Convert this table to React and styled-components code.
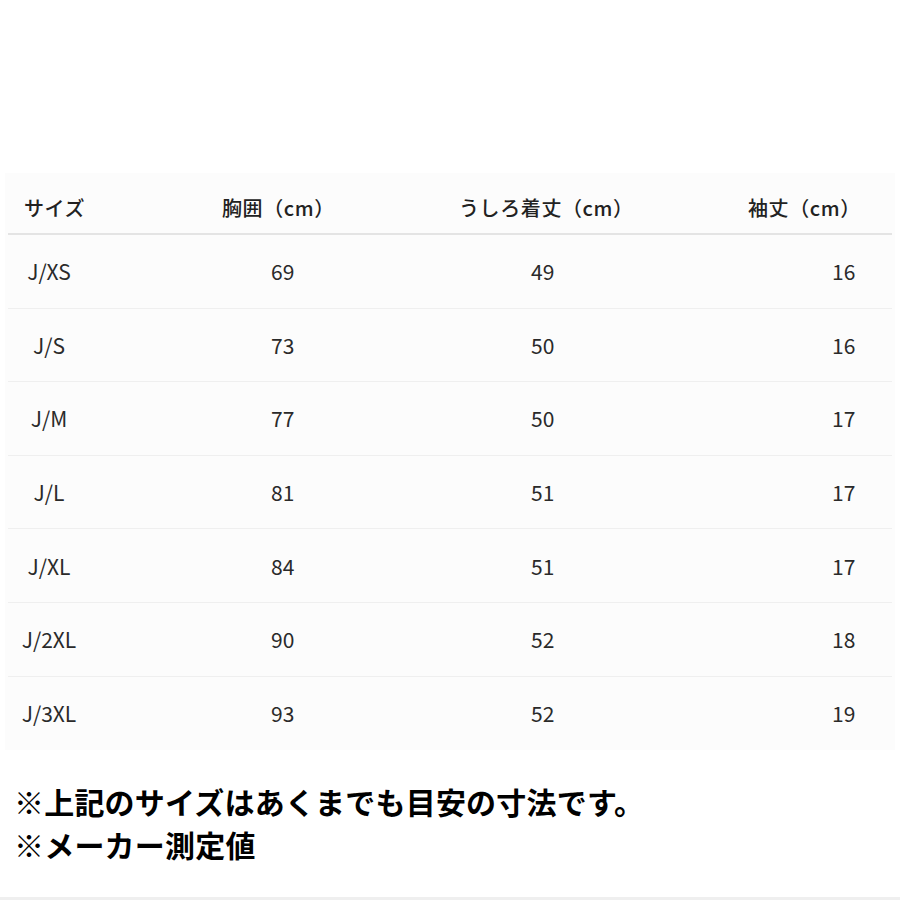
import React from 'react';
import styled, { createGlobalStyle } from 'styled-components';

const GlobalStyle = createGlobalStyle`
  html, body {
    margin: 0;
    padding: 0;
    background: #ffffff;
  }
  body {
    font-family: "Noto Sans CJK JP", "Noto Sans", sans-serif;
  }
`;

const Page = styled.div`
  width: 900px;
  height: 900px;
  box-sizing: border-box;
  padding-top: 173px;
  display: flex;
  flex-direction: column;
  border-bottom: 3px solid #efefef;
`;

const Table = styled.div`
  margin: 0 5px;
  padding: 0 3px;
  height: 577px;
  background: #fcfcfc;
`;

// column layout: each column has a width, a left pad for the header and one for values
const cols = [
  { w: 82, head: 16, val: 0, center: true },
  { w: 340, head: 132, val: 181 },
  { w: 270, head: 29, val: 101 },
  { w: 193, head: 48, val: 132 },
];

const grid = cols.map((c) => `${c.w}px`).join(' ');

const HeadRow = styled.div`
  display: grid;
  grid-template-columns: ${grid};
  height: 62px;
  box-sizing: border-box;
  align-items: center;
  padding-top: 8px;
  border-bottom: 2px solid #e4e4e4;
`;

const Row = styled.div`
  display: grid;
  grid-template-columns: ${grid};
  height: 73.6px;
  box-sizing: border-box;
  align-items: center;
  border-bottom: 1px solid ${({ $last }) => ($last ? 'transparent' : '#efefef')};
`;

const HeadCell = styled.div`
  padding-left: ${({ $pad }) => $pad}px;
  font-size: 20px;
  font-weight: 500;
  color: #222;
  white-space: nowrap;
  letter-spacing: 0.6px;
`;

const Cell = styled.div`
  padding-left: ${({ $pad }) => $pad}px;
  text-align: ${({ $center }) => ($center ? 'center' : 'left')};
  font-size: 21px;
  color: #2a2a2a;
  white-space: nowrap;
`;

const Notes = styled.div`
  padding: 30px 0 0 14px;
  display: flex;
  flex-direction: column;
`;

const Note = styled.div`
  font-size: 30px;
  line-height: 43px;
  font-weight: 700;
  color: #000;
  letter-spacing: 0.2px;
  white-space: nowrap;
`;

const headers = ['サイズ', '胸囲（cm）', 'うしろ着丈（cm）', '袖丈（cm）'];

const rows = [
  ['J/XS', 69, 49, 16],
  ['J/S', 73, 50, 16],
  ['J/M', 77, 50, 17],
  ['J/L', 81, 51, 17],
  ['J/XL', 84, 51, 17],
  ['J/2XL', 90, 52, 18],
  ['J/3XL', 93, 52, 19],
];

export default function App() {
  return (
    <>
      <GlobalStyle />
      <Page>
        <Table>
          <HeadRow>
            {headers.map((h, i) => (
              <HeadCell key={h} $pad={cols[i].head}>
                {h}
              </HeadCell>
            ))}
          </HeadRow>
          {rows.map((r, ri) => (
            <Row key={r[0]} $last={ri === rows.length - 1}>
              {r.map((v, i) => (
                <Cell key={i} $pad={cols[i].val} $center={cols[i].center}>
                  {v}
                </Cell>
              ))}
            </Row>
          ))}
        </Table>
        <Notes>
          <Note>※上記のサイズはあくまでも目安の寸法です。</Note>
          <Note>※メーカー測定値</Note>
        </Notes>
      </Page>
    </>
  );
}
